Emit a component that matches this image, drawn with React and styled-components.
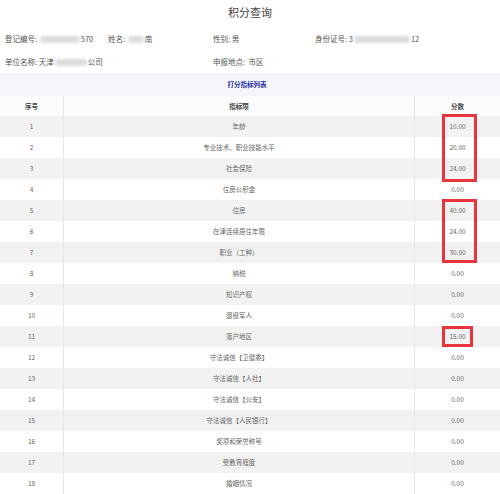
import React from "react";
import styled, { createGlobalStyle } from "styled-components";

const GlobalStyle = createGlobalStyle`
  body {
    margin: 0;
    background: #fff;
    font-family: "Noto Sans CJK SC", "Noto Sans", sans-serif;
    color: #555;
  }
`;

const Page = styled.div`
  width: 500px;
  height: 494px;
  overflow: hidden;
  background: #fff;
`;

const Title = styled.h1`
  margin: 0;
  height: 24px;
  line-height: 24px;
  font-size: 11px;
  font-weight: 400;
  color: #444;
  text-align: center;
`;

const Info = styled.div`
  display: grid;
  grid-template-columns: 103px 105px 102px 1fr;
  grid-auto-rows: 23px;
  align-items: center;
  padding: 3px 0 0 5px;
  height: 46px;
  font-size: 7.5px;
  color: #555;
`;

const Field = styled.div`
  grid-column: ${(p) => p.span || "auto"};
  white-space: nowrap;
`;

const Blur = styled.span`
  display: inline-block;
  vertical-align: middle;
  width: ${(p) => p.w}px;
  height: 7px;
  margin: 0 1px;
  border-radius: 3px;
  background: #dcdcdc;
  filter: blur(1.6px);
`;

const Band = styled.div`
  height: 23px;
  line-height: 23px;
  background: #f4f6f9;
  text-align: center;
  font-size: 6.5px;
  font-weight: 700;
  color: #2b2fa6;
  padding-right: 6px;
`;

const Table = styled.div`
  display: grid;
  grid-template-columns: 64px 351px 1fr;
`;

const Row = styled.div`
  display: contents;
`;

const Cell = styled.div`
  position: relative;
  height: ${(p) => (p.head ? 20 : 21)}px;
  line-height: ${(p) => (p.head ? 20 : 21)}px;
  text-align: center;
  font-size: 6.5px;
  font-weight: ${(p) => (p.head ? 700 : 400)};
  color: ${(p) => (p.head ? "#444" : "#666")};
  background: ${(p) => (p.head ? "#fbfcfd" : p.odd ? "#f2f2f2" : "#fff")};
  border-right: ${(p) => (p.last ? "none" : "1px solid #e6e6e6")};
`;

const RedBox = styled.div`
  position: absolute;
  z-index: 2;
  left: 27px;
  top: ${(p) => p.top}px;
  width: ${(p) => p.w}px;
  height: ${(p) => p.h}px;
  box-sizing: border-box;
  border: 3px solid #e8343c;
  pointer-events: none;
`;

const rows = [
  ["年龄", "10.00"],
  ["专业技术、职业技能水平", "20.00"],
  ["社会保险", "24.00"],
  ["住房公积金", "0.00"],
  ["住房", "40.00"],
  ["在津连续居住年限", "24.00"],
  ["职业（工种）", "30.00"],
  ["纳税", "0.00"],
  ["知识产权", "0.00"],
  ["退役军人", "0.00"],
  ["落户地区", "15.00"],
  ["守法诚信【卫健委】", "0.00"],
  ["守法诚信【人社】", "0.00"],
  ["守法诚信【公安】", "0.00"],
  ["守法诚信【人民银行】", "0.00"],
  ["奖项和荣誉称号", "0.00"],
  ["受教育程度", "0.00"],
  ["婚姻情况", "0.00"],
];

// red highlight boxes, keyed by the row they start on
const boxes = {
  0: { top: -2, w: 35, h: 68 },
  4: { top: -1, w: 35, h: 64 },
  10: { top: 0, w: 31, h: 21 },
};

export default function App() {
  return (
    <Page>
      <GlobalStyle />
      <Title>积分查询</Title>
      <Info>
        <Field>
          登记编号: <Blur w={40} />570
        </Field>
        <Field>
          姓名: <Blur w={16} />南
        </Field>
        <Field>性别: 男</Field>
        <Field>
          身份证号: 3<Blur w={56} />12
        </Field>
        <Field span="1 / span 2">
          单位名称: 天津<Blur w={32} />公司
        </Field>
        <Field span="3 / span 2">申报地点:&nbsp; 市区</Field>
      </Info>
      <Band>打分指标列表</Band>
      <Table>
        <Row>
          <Cell head>序号</Cell>
          <Cell head>指标项</Cell>
          <Cell head last>
            分数
          </Cell>
        </Row>
        {rows.map(([name, score], i) => {
          const odd = i % 2 === 0;
          const box = boxes[i];
          return (
            <Row key={i}>
              <Cell odd={odd}>{i + 1}</Cell>
              <Cell odd={odd}>{name}</Cell>
              <Cell odd={odd} last>
                {score}
                {box && <RedBox top={box.top} w={box.w} h={box.h} />}
              </Cell>
            </Row>
          );
        })}
      </Table>
    </Page>
  );
}
